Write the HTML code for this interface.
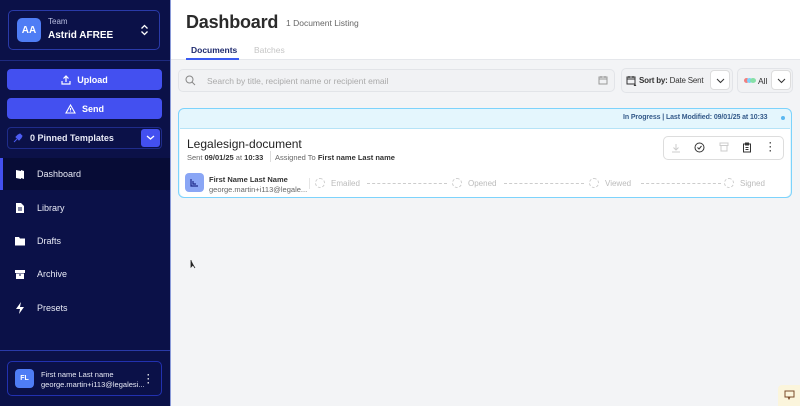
<!DOCTYPE html>
<html><head><meta charset="utf-8"><style>
*{box-sizing:border-box;margin:0;padding:0}
body{width:800px;height:406px;overflow:hidden;font-family:"Liberation Sans",sans-serif;background:#f3f4f6;position:relative}
.sb{position:absolute;left:0;top:0;width:170px;height:406px;background:#0b1148;color:#fff}
.abs{position:absolute;white-space:nowrap}
.btn{position:absolute;left:7px;width:155px;height:21px;background:#4350f0;border-radius:4px;color:#fff;font-size:9px;font-weight:bold;display:flex;align-items:center;justify-content:center;gap:6px}
.nav{position:absolute;left:0;width:170px;height:32px;display:flex;align-items:center;font-size:9px;color:#e8eaf6}
.nav svg{position:absolute;left:14px}
.nav span{position:absolute;left:37px}
.main{position:absolute;left:171px;top:0;right:0;bottom:0}
.t{font-size:8px;color:#bbb}
.circ{position:absolute;width:10px;height:10px;border:1px dashed #ccc;border-radius:50%}
.dash{position:absolute;border-top:1px dashed #ccc;height:0}
</style></head><body>
<div class="sb">
 <div class="abs" style="left:8px;top:10px;width:152px;height:40px;border:1px solid #2a3aa8;border-radius:5px"></div>
 <div class="abs" style="left:17px;top:18px;width:24px;height:24px;background:#4f7df5;border-radius:5px;font-size:10px;font-weight:bold;display:flex;align-items:center;justify-content:center">AA</div>
 <div class="abs" style="left:48px;top:17px;font-size:8px;color:#b8bde0">Team</div>
 <div class="abs" style="left:48px;top:30px;font-size:10px;font-weight:bold">Astrid AFREE</div>
 <svg class="abs" style="left:140px;top:24px" width="9" height="12" viewBox="0 0 9 12"><path d="M1.5 4.5L4.5 1.5L7.5 4.5M1.5 7.5L4.5 10.5L7.5 7.5" stroke="#fff" stroke-width="1.3" fill="none"/></svg>
 <div class="abs" style="left:0;top:60px;width:170px;border-top:1px solid #1e2a80"></div>
 <div class="btn" style="top:69px"><svg width="10" height="10" viewBox="0 0 10 10"><path d="M5 7V1M2.5 3.5L5 1L7.5 3.5M1 6v3h8V6" stroke="#fff" stroke-width="1.2" fill="none"/></svg>Upload</div>
 <div class="btn" style="top:98px"><svg width="11" height="10" viewBox="0 0 11 10"><path d="M5.5 1L10 9H1Z M5.5 4v2.5M5.5 7.5v.5" stroke="#fff" stroke-width="1.1" fill="none"/></svg>Send</div>
 <div class="abs" style="left:7px;top:127px;width:155px;height:22px;border:1px solid #1f2c8a;border-radius:4px"></div>
 <svg class="abs" style="left:13px;top:133px" width="10" height="10" viewBox="0 0 10 10"><path d="M1 9L4 6M3 4L6 7L8 5L9 3L7 1L5 2Z" fill="#4d5cf5" stroke="#4d5cf5"/></svg>
 <div class="abs" style="left:30px;top:133px;font-size:9px;font-weight:bold;color:#e8eaf6">0 Pinned Templates</div>
 <div class="abs" style="left:141px;top:129px;width:19px;height:18px;background:#4350f0;border-radius:3px"></div>
 <svg class="abs" style="left:146px;top:134px" width="9" height="7"><path d="M1 2L4.5 5L8 2" stroke="#fff" stroke-width="1.3" fill="none"/></svg>
 <div class="nav" style="top:158px;background:#070c36"><div class="abs" style="left:0;top:0;width:3px;height:32px;background:#4350f0"></div><svg width="12" height="12" viewBox="0 0 12 12"><path d="M2 2l5 1v8l-5-1z M7 2l3 1v8l-3-1" fill="#fff"/></svg><span>Dashboard</span></div>
 <div class="nav" style="top:192px"><svg width="12" height="12" viewBox="0 0 12 12"><path d="M2 1h5l3 3v7H2z" fill="#fff"/><path d="M4 6h4M4 8h4" stroke="#0b1148"/></svg><span>Library</span></div>
 <div class="nav" style="top:225px"><svg width="13" height="12" viewBox="0 0 13 12"><path d="M1 2h4l1 1.5h5v7H1z" fill="#fff"/></svg><span>Drafts</span></div>
 <div class="nav" style="top:258px"><svg width="12" height="12" viewBox="0 0 12 12"><path d="M1 2h10v3H1zM2 5.5h8V11H2z" fill="#fff"/><path d="M5 7h2" stroke="#0b1148"/></svg><span>Archive</span></div>
 <div class="nav" style="top:292px"><svg width="12" height="12" viewBox="0 0 12 12"><path d="M7 0L2 7h4l-1 5 5-7H6z" fill="#fff"/></svg><span>Presets</span></div>
 <div class="abs" style="left:0;top:350px;width:170px;border-top:1px solid #2a3aa8"></div>
 <div class="abs" style="left:7px;top:361px;width:155px;height:35px;border:1px solid #2231b0;border-radius:5px"></div>
 <div class="abs" style="left:15px;top:369px;width:19px;height:19px;background:#4f7df5;border-radius:4px;font-size:7px;font-weight:bold;display:flex;align-items:center;justify-content:center">FL</div>
 <div class="abs" style="left:41px;top:370px;font-size:7.5px;color:#e8eaf6">First name Last name</div>
 <div class="abs" style="left:41px;top:380px;font-size:7.5px;color:#e8eaf6">george.martin+i113@legalesi...</div>
 <div class="abs" style="left:147px;top:373px;font-size:9px;font-weight:bold;line-height:4px">·<br>·<br>·</div>
</div>
<div class="abs" style="left:170px;top:0;width:1px;height:406px;background:#8a9ad8"></div>
<div class="main">
 <div class="abs" style="left:0;top:0;width:629px;height:60px;background:#fff;border-bottom:1px solid #e5e7eb"></div>
 <div class="abs" style="left:15px;top:12px;font-size:18px;font-weight:bold;color:#2b2b2b;letter-spacing:-0.2px">Dashboard</div>
 <div class="abs" style="left:115px;top:18px;font-size:8.5px;color:#666">1 Document Listing</div>
 <div class="abs" style="left:20px;top:45px;font-size:8.5px;font-weight:bold;color:#1e2a6e">Documents</div>
 <div class="abs" style="left:15px;top:58px;width:53px;height:2px;background:#3b5bf0"></div>
 <div class="abs" style="left:83px;top:45px;font-size:8.5px;color:#c5c5c5">Batches</div>
 <div class="abs" style="left:7px;top:69px;width:437px;height:23px;background:#f1f2f4;border:1px solid #e2e4e8;border-radius:5px"></div>
 <svg class="abs" style="left:14px;top:75px" width="11" height="11"><circle cx="4.5" cy="4.5" r="3.5" stroke="#888" fill="none"/><path d="M7 7l3 3" stroke="#888"/></svg>
 <div class="abs t" style="left:36px;top:76px;font-size:8.5px;color:#aaa">Search by title, recipient name or recipient email</div>
 <svg class="abs" style="left:427px;top:75px" width="10" height="10"><rect x="1" y="2" width="8" height="7" stroke="#999" fill="none"/><path d="M1 4h8M3 1v2M7 1v2" stroke="#999"/></svg>
 <div class="abs" style="left:450px;top:68px;width:112px;height:25px;background:#f1f2f4;border:1px solid #e2e4e8;border-radius:5px"></div>
 <svg class="abs" style="left:455px;top:75px" width="11" height="11"><rect x="1" y="2" width="8" height="7" stroke="#333" fill="none"/><path d="M1 4h8M3 1v2M7 1v2M9 7v4M8 10l1 1 1-1" stroke="#333"/></svg>
 <div class="abs" style="left:468px;top:76px;font-size:8px;color:#333;letter-spacing:-0.2px"><b>Sort by:</b> Date Sent</div>
 <div class="abs" style="left:539px;top:70px;width:20px;height:20px;background:#fff;border:1px solid #ddd;border-radius:4px"></div>
 <svg class="abs" style="left:545px;top:78px" width="9" height="6"><path d="M1 1l3.5 3.5L8 1" stroke="#333" fill="none"/></svg>
 <div class="abs" style="left:566px;top:68px;width:56px;height:25px;background:#f1f2f4;border:1px solid #e2e4e8;border-radius:5px"></div>
 <div class="abs" style="left:573px;top:78px;width:5px;height:5px;border-radius:50%;background:#f08080"></div>
 <div class="abs" style="left:576px;top:78px;width:5px;height:5px;border-radius:50%;background:#7dd3fc"></div>
 <div class="abs" style="left:579px;top:78px;width:6px;height:5px;border-radius:50%;background:#86e0a8"></div>
 <div class="abs" style="left:587px;top:76px;font-size:8.5px;color:#333">All</div>
 <div class="abs" style="left:600px;top:70px;width:20px;height:20px;background:#fff;border:1px solid #ddd;border-radius:4px"></div>
 <svg class="abs" style="left:606px;top:78px" width="9" height="6"><path d="M1 1l3.5 3.5L8 1" stroke="#333" fill="none"/></svg>
 <div class="abs" style="left:7px;top:108px;width:614px;height:90px;background:#e4f6fd;border:1px solid #7dd3fc;border-radius:6px"></div>
 <div class="abs" style="left:452px;top:114px;font-size:7px;color:#345a8a;font-weight:bold;letter-spacing:-0.1px">In Progress | Last Modified: 09/01/25 at 10:33</div>
 <div class="abs" style="left:610px;top:116px;width:4px;height:4px;border-radius:50%;background:#5bb8f0"></div>
 <div class="abs" style="left:9px;top:128px;width:610px;height:69px;background:#fff;border-top:1px solid #b6e3f7;border-radius:0 0 5px 5px"></div>
 <div class="abs" style="left:16px;top:137px;font-size:12px;color:#222">Legalesign-document</div>
 <div class="abs" style="left:16px;top:153px;font-size:7.5px;color:#666">Sent <b style="color:#333">09/01/25</b> at <b style="color:#333">10:33</b></div>
 <div class="abs" style="left:99px;top:151px;height:11px;border-left:1px solid #ddd"></div>
 <div class="abs" style="left:104px;top:153px;font-size:7.5px;color:#666">Assigned To <b style="color:#333">First name Last name</b></div>
 <div class="abs" style="left:492px;top:136px;width:121px;height:24px;border:1px solid #ddd;border-radius:5px;background:#fff"></div>
 <svg class="abs" style="left:500px;top:143px" width="10" height="10"><path d="M5 1v6M2.5 4.5L5 7l2.5-2.5M1 9h8" stroke="#ccc" fill="none"/></svg>
 <svg class="abs" style="left:523px;top:142px" width="11" height="11"><circle cx="5.5" cy="5.5" r="4.5" stroke="#333" fill="none"/><path d="M3.5 5.5l1.5 1.5 2.5-3" stroke="#333" fill="none"/></svg>
 <svg class="abs" style="left:548px;top:142px" width="10" height="10"><path d="M1 1h8v2.5H1zM2 3.5h6V9H2z" stroke="#ccc" fill="none"/></svg>
 <svg class="abs" style="left:571px;top:142px" width="10" height="11"><rect x="1.5" y="2" width="7" height="8" stroke="#333" fill="none"/><path d="M3.5 1h3v2h-3zM3.5 5.5h3M3.5 7.5h3" stroke="#333" fill="none"/></svg>
 <div class="abs" style="left:598px;top:141px;font-size:9px;font-weight:bold;line-height:4px;color:#333">·<br>·<br>·</div>
 <div class="abs" style="left:14px;top:173px;width:19px;height:19px;background:#8aa6f5;border-radius:4px"></div>
 <svg class="abs" style="left:18px;top:177px" width="11" height="11"><path d="M2 2v7h7M4 4v3h3" stroke="#1e2a8a" stroke-width="1.2" fill="none"/></svg>
 <div class="abs" style="left:38px;top:175px;font-size:7.5px;font-weight:bold;color:#333">First Name Last Name</div>
 <div class="abs" style="left:38px;top:185px;font-size:7.5px;color:#666">george.martin+i113@legale...</div>
 <div class="abs" style="left:138px;top:178px;height:11px;border-left:1px solid #e5e5e5"></div>
 <div class="circ" style="left:144px;top:178px"></div><div class="abs t" style="left:160px;top:179px">Emailed</div>
 <div class="dash" style="left:196px;top:183px;width:80px"></div>
 <div class="circ" style="left:281px;top:178px"></div><div class="abs t" style="left:297px;top:179px">Opened</div>
 <div class="dash" style="left:333px;top:183px;width:80px"></div>
 <div class="circ" style="left:418px;top:178px"></div><div class="abs t" style="left:434px;top:179px">Viewed</div>
 <div class="dash" style="left:470px;top:183px;width:80px"></div>
 <div class="circ" style="left:553px;top:178px"></div><div class="abs t" style="left:569px;top:179px">Signed</div>
 <svg class="abs" style="left:19px;top:259px" width="7" height="10"><path d="M1 1v7l2-2 2 3" fill="#222" stroke="#222" stroke-width=".8"/></svg>
 <div class="abs" style="left:607px;top:385px;width:22px;height:21px;background:#fbf5dc;border-radius:4px 0 0 0"></div>
 <svg class="abs" style="left:613px;top:390px" width="11" height="10"><rect x="1" y="1" width="9" height="6" stroke="#7a4a2a" fill="none"/><path d="M4 7l1 2 1-2" stroke="#7a4a2a" fill="none"/></svg>
</div>
</body></html>
